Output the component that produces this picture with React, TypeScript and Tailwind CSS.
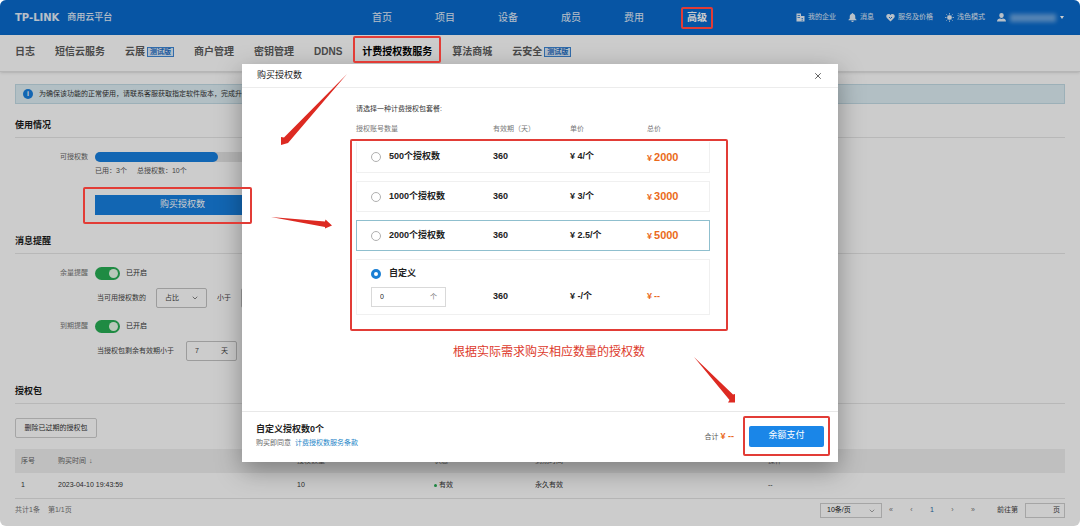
import { useState } from "react";
import type { ReactNode } from "react";
import clsx from "clsx";
import { ChevronDown, X } from "lucide-react";

const MAIN_NAV = ["首页", "项目", "设备", "成员", "费用", "高级"];

const TABS = [
  { label: "日志" },
  { label: "短信云服务" },
  { label: "云展", beta: true },
  { label: "商户管理" },
  { label: "密钥管理" },
  { label: "DDNS" },
  { label: "计费授权数服务" },
  { label: "算法商城" },
  { label: "云安全", beta: true },
];

const PLANS = [
  { id: "500", label: "500个授权数", days: 360, unit: "¥ 4/个", total: "2000" },
  { id: "1000", label: "1000个授权数", days: 360, unit: "¥ 3/个", total: "3000" },
  { id: "2000", label: "2000个授权数", days: 360, unit: "¥ 2.5/个", total: "5000" },
];

// red frame drawn around whatever the guide points at
function Frame({ className }: { className: string }) {
  return <span className={clsx("pointer-events-none absolute z-30 rounded-xs border-2 border-[#e23c36]", className)} />;
}

function BuildingIcon() {
  return (
    <svg viewBox="0 0 18 18" className="size-[9px]" fill="currentColor" aria-hidden="true">
      <path fillRule="evenodd" d="M1 1h9v5h7v11H1V1Zm2 3v1.500h5V4H3Zm0 4v1.500h5V8H3Zm8 2v1.500h3V10h-3Zm0 3.500V15h3v-1.500h-3Z" />
    </svg>
  );
}

function BellIcon() {
  return (
    <svg viewBox="0 0 18 18" className="size-[9px]" fill="currentColor" aria-hidden="true">
      <path d="M9 0a1.500 1.500 0 0 1 1.500 1.600C13 2.300 14.500 4.500 14.500 7v4l2.500 2.500V14.500H1V13.500L3.500 11V7c0-2.500 1.500-4.700 4-5.400A1.500 1.500 0 0 1 9 0ZM6.500 15.500h5a2.500 2.500 0 0 1-5 0Z" />
    </svg>
  );
}

function HeartIcon() {
  return (
    <svg viewBox="0 0 18 18" className="size-[9px]" aria-hidden="true">
      <path d="M9 17 1.500 9.500C-.5 7 .5 2 5 1.800c2 0 3.200 1 4 2.200.8-1.200 2-2.200 4-2.200C17.500 2 18.500 7 16.500 9.500L9 17Z" fill="currentColor" />
      <path d="m6 8 3 3 3-3" fill="none" stroke="#096bce" strokeWidth="1.800" />
    </svg>
  );
}

function SunIcon() {
  return (
    <svg viewBox="0 0 18 18" className="size-[9px]" fill="none" stroke="currentColor" strokeWidth="1.500" aria-hidden="true">
      <circle cx="9" cy="9" r="4" fill="currentColor" />
      <path d="M9 0v3M9 15v3M0 9h3M15 9h3M2.600 2.600l2.200 2.200M13.200 13.200l2.200 2.200M15.400 2.600l-2.200 2.200M4.800 13.200l-2.200 2.200" />
    </svg>
  );
}

function UserIcon() {
  return (
    <svg viewBox="0 0 18 18" className="size-[9px]" fill="currentColor" aria-hidden="true">
      <path d="M9 0a4.500 4.500 0 0 1 4.500 4.500C13.500 7.500 11.500 10 9 10S4.500 7.500 4.500 4.500A4.500 4.500 0 0 1 9 0ZM0 17c0-4 3-5.500 6-6 2 1.200 4 1.200 6 0 3 .5 6 2 6 6H0Z" />
    </svg>
  );
}

function HeaderLink({ icon, children }: { icon: ReactNode; children: ReactNode }) {
  return (
    <a href="#" className="flex items-center gap-[3px]">
      {icon}
      {children}
    </a>
  );
}

function Header() {
  return (
    <header className="flex h-[35px] items-center bg-[#096bce] pr-4 pl-[15px] text-white/90">
      <a href="#" className="flex w-[357px] shrink-0 items-center gap-2">
        <span className="font-['DejaVu_Sans',sans-serif] text-[10px] font-bold">TP-LINK</span>
        <span className="text-[9px] font-medium">商用云平台</span>
      </a>
      <nav className="flex shrink-0 gap-[43px] text-[10px]">
        {MAIN_NAV.map((item) => (
          <a key={item} href="#" className={clsx("relative leading-4", item === "高级" && "font-bold text-white")}>
            {item}
            {item === "高级" && <Frame className="-inset-x-[6px] -inset-y-[3px]" />}
          </a>
        ))}
      </nav>
      <div className="ml-auto flex shrink-0 items-center gap-3 text-[7px]">
        <HeaderLink icon={<BuildingIcon />}>我的企业</HeaderLink>
        <HeaderLink icon={<BellIcon />}>消息</HeaderLink>
        <HeaderLink icon={<HeartIcon />}>服务及价格</HeaderLink>
        <HeaderLink icon={<SunIcon />}>浅色模式</HeaderLink>
        <button type="button" aria-label="账号" className="flex items-center gap-1">
          <UserIcon />
          <span className="h-2 w-[46px] bg-white/40 blur-[2px]" />
          <span className="border-x-2 border-t-[3px] border-x-transparent border-t-white" />
        </button>
      </div>
    </header>
  );
}

function SubNav() {
  return (
    <nav className="flex h-[37px] items-center gap-5 border-b border-[#e4e4e4] px-[15px] pb-[3px] text-[10px] font-bold whitespace-nowrap text-[#5c5c5c] shadow-sm">
      {TABS.map(({ label, beta }) => (
        <a
          key={label}
          href="#"
          className={clsx("relative flex items-center gap-0.5 leading-4", label === "计费授权数服务" && "text-black")}
        >
          {label}
          {beta && (
            <span className="flex h-[10px] w-[27px] items-center justify-center border border-[#3f87d6] bg-[#dcebfa] text-[7px] text-[#1f6fc4]">
              测试版
            </span>
          )}
          {label === "计费授权数服务" && <Frame className="-inset-x-[9px] -top-2 -bottom-[3px]" />}
        </a>
      ))}
    </nav>
  );
}

function SectionTitle({ children }: { children: ReactNode }) {
  return <h2 className="border-b border-[#e6e6e6] pb-1 text-[9px] leading-4 font-bold text-[#1a1a1a]">{children}</h2>;
}

function Toggle({ label }: { label: string }) {
  const [on, setOn] = useState(true);
  return (
    <label className="flex h-4 items-center">
      <span className="w-[73px] text-right text-[#777]">{label}</span>
      <input type="checkbox" checked={on} onChange={() => setOn(!on)} className="peer sr-only" />
      <span className="ml-[7px] flex h-[13px] w-[25px] justify-start rounded-full bg-[#bbb] p-[2px] peer-checked:justify-end peer-checked:bg-[#27ae54]">
        <span className="size-[9px] rounded-full bg-[#e8fbe9]" />
      </span>
      <span className="ml-[6px] text-[#333]">{on ? "已开启" : "已关闭"}</span>
    </label>
  );
}

function Usage() {
  return (
    <section className="mt-[13px]">
      <SectionTitle>使用情况</SectionTitle>
      <div className="mt-[11px] flex h-4 items-center gap-[7px] text-[#666]">
        <span className="w-[73px] text-right">可授权数</span>
        <div className="h-[10px] w-[175px] rounded-full bg-[#e5e5e5]">
          <div className="h-full w-[70%] rounded-full bg-[#1780e0]" />
        </div>
      </div>
      <p className="ml-20 flex h-3 items-center gap-[10px] text-[#555]">
        <span>已用：3个</span>
        <span>总授权数：10个</span>
      </p>
      <div className="relative mt-[18px] ml-20 w-[175px]">
        <button type="button" className="h-5 w-full bg-[#1780e0] text-[9px] text-white">
          购买授权数
        </button>
        <Frame className="-top-2 right-[18px] -bottom-[9px] -left-3" />
      </div>
    </section>
  );
}

function Reminders() {
  return (
    <section className="mt-[18px] text-[#444]">
      <SectionTitle>消息提醒</SectionTitle>
      <div className="mt-[11px]">
        <Toggle label="余量提醒" />
      </div>
      <div className="mt-[7px] ml-[82px] flex h-5 items-center gap-[10px]">
        <label htmlFor="metric">当可用授权数的</label>
        <div className="relative h-full w-[51px]">
          <select id="metric" className="h-full w-full appearance-none rounded-xs border border-[#c4c4c4] pl-2">
            <option>占比</option>
            <option>数量</option>
          </select>
          <ChevronDown className="pointer-events-none absolute top-1.5 right-2 size-2" />
        </div>
        <label htmlFor="threshold">小于</label>
        <input id="threshold" defaultValue="20" className="h-full w-12 rounded-xs border border-[#c4c4c4] pl-2" />
      </div>
      <div className="mt-[10px]">
        <Toggle label="到期提醒" />
      </div>
      <div className="mt-[7px] ml-[82px] flex h-5 items-center gap-3">
        <label htmlFor="expiry">当授权包剩余有效期小于</label>
        <div className="flex h-full w-[51px] items-center rounded-xs border border-[#c4c4c4] px-2">
          <input id="expiry" defaultValue="7" className="w-full min-w-0 outline-none" />
          <span>天</span>
        </div>
      </div>
    </section>
  );
}

function Packages() {
  return (
    <section className="mt-[22px]">
      <SectionTitle>授权包</SectionTitle>
      <button type="button" className="mt-[14px] h-5 w-[82px] rounded-xs border border-[#cfcfcf] text-[#333]">
        删除已过期的授权包
      </button>
      <table className="mt-[11px] w-full table-fixed border-collapse text-left text-[#333]">
        <thead>
          <tr className="h-6 bg-[#efefef] text-[#666]">
            <th className="w-[43px] pl-[6px] font-normal">序号</th>
            <th className="w-[239px] font-normal">购买时间 <span className="ml-px">↓</span></th>
            <th className="w-[137px] font-normal">授权数量</th>
            <th className="w-[101px] font-normal">状态</th>
            <th className="w-[233px] font-normal">到期时间</th>
            <th className="font-normal">操作</th>
          </tr>
        </thead>
        <tbody>
          <tr className="h-[25px] border-b border-[#e4e4e4]">
            <td className="pl-[6px]">1</td>
            <td>2023-04-10 19:43:59</td>
            <td>10</td>
            <td>
              <span className="mr-0.5 inline-block size-[3px] rounded-full bg-[#27ae54] align-middle" />
              有效
            </td>
            <td>永久有效</td>
            <td>--</td>
          </tr>
        </tbody>
      </table>
      <div className="mt-1 flex h-[15px] items-center text-[#777]">
        <span>共计1条</span>
        <span className="ml-2">第1/1页</span>
        <div className="relative ml-auto h-full w-[62px]">
          <select aria-label="每页条数" className="h-full w-full appearance-none border border-[#cfcfcf] pl-[6px] text-[#222]">
            <option>10条/页</option>
            <option>20条/页</option>
          </select>
          <ChevronDown className="pointer-events-none absolute top-1 right-1.5 size-2" />
        </div>
        <div className="ml-[7px] flex w-[86px] justify-between">
          <button type="button" aria-label="首页码">«</button>
          <button type="button" aria-label="上一页">‹</button>
          <button type="button" className="text-[#2b6ca8]">1</button>
          <button type="button" aria-label="下一页">›</button>
          <button type="button" aria-label="末页码">»</button>
        </div>
        <label htmlFor="goto" className="ml-[22px] text-[#444]">前往第</label>
        <div className="ml-[7px] flex h-full w-10 items-center border border-[#cfcfcf] pr-1 text-[#444]">
          <input id="goto" className="w-full min-w-0 outline-none" />
          <span>页</span>
        </div>
      </div>
    </section>
  );
}

function PlanRadio({ id, label, checked, onSelect }: { id: string; label: string; checked: boolean; onSelect: () => void }) {
  return (
    <label className="flex items-center gap-2">
      <input
        type="radio"
        name="plan"
        value={id}
        checked={checked}
        onChange={onSelect}
        className="size-[10px] appearance-none rounded-full border border-[#b0b0b0] bg-white checked:border-[3px] checked:border-[#1a7fd4]"
      />
      {label}
    </label>
  );
}

function PurchaseDialog() {
  const [plan, setPlan] = useState("custom");

  return (
    <div
      role="dialog"
      aria-labelledby="dialog-title"
      className="relative flex min-h-[398px] w-[596px] max-w-full flex-col bg-white text-[7px] shadow-[0_8px_24px_rgba(0,0,0,0.35)]"
    >
      <div className="flex h-6 items-center justify-between border-b border-[#ececec] px-[15px]">
        <h1 id="dialog-title" className="text-[9px] text-[#222]">购买授权数</h1>
        <button type="button" aria-label="关闭">
          <X className="size-[10px] text-[#444]" />
        </button>
      </div>

      <div className="flex-1 pt-[14px] pr-32 pl-[114px]">
        <p className="leading-[13px] text-[#333]">请选择一种计费授权包套餐:</p>
        <div className="relative">
          <table className="w-full table-fixed border-separate border-spacing-x-0 border-spacing-y-2 text-left text-[9px] font-bold text-[#222]">
            <thead>
              <tr className="h-[11px] text-[7px] leading-[11px] text-[#777]">
                <th className="w-[137px] font-normal">授权账号数量</th>
                <th className="w-[77px] font-normal">有效期（天）</th>
                <th className="w-[77px] font-normal">单价</th>
                <th className="font-normal">总价</th>
              </tr>
            </thead>
            <tbody>
              {PLANS.map((p, i) => {
                const border = clsx(
                  "border-b",
                  i > 0 && "border-t",
                  p.id === "2000" ? "border-[#8fbfce]" : "border-[#f0f0f0]",
                );
                return (
                  <tr key={p.id} className="h-[31px]">
                    <td className={clsx("border-l pl-[14px]", border)}>
                      <PlanRadio id={p.id} label={p.label} checked={plan === p.id} onSelect={() => setPlan(p.id)} />
                    </td>
                    <td className={border}>{p.days}</td>
                    <td className={border}>{p.unit}</td>
                    <td className={clsx("border-r text-[#ea6a1b]", border)}>
                      <span className="mr-0.5">¥</span>
                      <span className="text-[11px]">{p.total}</span>
                    </td>
                  </tr>
                );
              })}
              <tr className="h-14">
                <td className="border-y border-l border-[#f0f0f0] pl-[14px]">
                  <PlanRadio id="custom" label="自定义" checked={plan === "custom"} onSelect={() => setPlan("custom")} />
                  <div className="mt-[7px] flex h-5 w-[75px] items-center border border-[#d9d9d9] px-2 text-[7px] font-normal text-[#777]">
                    <input aria-label="自定义授权数" defaultValue="0" className="w-full min-w-0 text-[#222] outline-none" />
                    <span>个</span>
                  </div>
                </td>
                <td className="border-y border-[#f0f0f0] pt-5">360</td>
                <td className="border-y border-[#f0f0f0] pt-5">¥ -/个</td>
                <td className="border-y border-r border-[#f0f0f0] pt-5 text-[#ea6a1b]">
                  <span className="mr-0.5">¥</span>--
                </td>
              </tr>
            </tbody>
          </table>
          <Frame className="top-6 -right-[18px] -bottom-2 -left-[6px]" />
        </div>
        <p className="mt-[21px] ml-[97px] text-[12px] leading-4 whitespace-nowrap text-[#dd3a2c]">根据实际需求购买相应数量的授权数</p>
      </div>

      <div className="flex h-[51px] items-center border-t border-[#e8e8e8] px-[14px]">
        <div className="pb-1">
          <p className="text-[9px] leading-4 font-bold text-[#222]">自定义授权数0个</p>
          <p className="leading-3 text-[#666]">
            购买即同意 <a href="#" className="ml-0.5 text-[#1c86c8]">计费授权数服务条款</a>
          </p>
        </div>
        <p className="ml-auto text-[#555]">
          合计<span className="ml-0.5 text-[9px] font-bold text-[#ea6a1b]">¥ --</span>
        </p>
        <div className="relative ml-[15px] pb-0.5">
          <button type="button" className="block h-[21px] w-[75px] rounded-xs bg-[#1a86e8] text-[9px] text-white">
            余额支付
          </button>
          <Frame className="-inset-x-[6px] -top-[10px] -bottom-[7px]" />
        </div>
      </div>

      <svg className="pointer-events-none absolute top-[10px] left-[38px] h-[72px] w-[68px]" viewBox="0 0 68 72" fill="#dd2a22" aria-hidden="true">
        <path d="M67 0 8 69 1 71 1 63 4 63.500Z" />
      </svg>
      <svg className="pointer-events-none absolute top-[152px] left-[29px] h-[14px] w-[62px]" viewBox="0 0 62 14" fill="#dd2a22" aria-hidden="true">
        <path d="M0 1 54 5.500 54.500 3.500 61 9.500 54 12.500 54 11Z" />
      </svg>
      <svg className="pointer-events-none absolute top-[293px] left-[452px] h-[46px] w-[42px]" viewBox="0 0 42 46" fill="#dd2a22" aria-hidden="true">
        <path d="M0 0 39 37.500 41 37 41 45.500 34 45.500 35.500 43Z" />
      </svg>
    </div>
  );
}

export default function App() {
  return (
    <div className="relative min-h-screen overflow-hidden rounded-md bg-white font-['Liberation_Sans','Noto_Sans_CJK_SC',sans-serif] text-[7px]">
      <Header />
      <SubNav />
      <main className="px-[15px] pt-3 pb-[7px]">
        <div className="flex h-5 items-center gap-[6px] border border-[#c3dde6] bg-[#dfeff5] px-[7px] text-[#333]">
          <span className="flex size-[10px] items-center justify-center rounded-full bg-[#1780e0] font-bold text-white">i</span>
          为确保该功能的正常使用，请联系客服获取指定软件版本，完成升级后再购买
        </div>
        <Usage />
        <Reminders />
        <Packages />
      </main>
      <div className="absolute inset-0 z-10 bg-black/20" />
      <div className="absolute inset-x-0 top-16 z-20 flex justify-center">
        <PurchaseDialog />
      </div>
    </div>
  );
}
